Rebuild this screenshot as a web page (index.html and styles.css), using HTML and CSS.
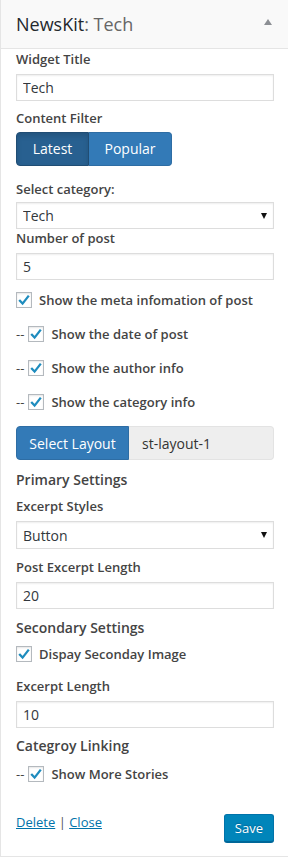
FILE: index.html
```html
<!DOCTYPE html>
<html lang="en">
<head>
  <meta charset="UTF-8">
  <title>NewsKit: Tech</title>
  <link rel="stylesheet" href="styles.css">
</head>
<body>
  <div class="widget">
    <div class="widget-top">
      <h3 class="widget-title">NewsKit<span class="in-title">: Tech</span></h3>
      <span class="toggle-arrow"></span>
    </div>

    <div class="widget-inside">
      <div class="field">
        <label class="field-label" for="title">Widget Title</label>
        <input class="text-input" type="text" id="title" value="Tech">
      </div>

      <div class="field field-btns">
        <label class="field-label">Content Filter</label>
        <div class="btn-group">
          <button class="btn btn-active btn-latest">Latest</button>
          <button class="btn btn-popular">Popular</button>
        </div>
      </div>

      <div class="field field-tight">
        <label class="field-label" for="cat">Select category:</label>
        <div class="select-box">
          <select id="cat"><option>Tech</option></select>
          <span class="select-arrow"></span>
        </div>
      </div>

      <div class="field">
        <label class="field-label" for="num">Number of post</label>
        <input class="text-input" type="text" id="num" value="5">
      </div>

      <div class="check-row first">
        <span class="cb"><svg viewBox="0 0 16 16" width="16" height="16"><polyline points="3.2,8 6.6,11.6 12.8,3.6" /></svg></span>
        Show the meta infomation of post
      </div>
      <div class="check-row sub">
        <span class="dash">--</span>
        <span class="cb"><svg viewBox="0 0 16 16" width="16" height="16"><polyline points="3.2,8 6.6,11.6 12.8,3.6" /></svg></span>
        Show the date of post
      </div>
      <div class="check-row sub">
        <span class="dash">--</span>
        <span class="cb"><svg viewBox="0 0 16 16" width="16" height="16"><polyline points="3.2,8 6.6,11.6 12.8,3.6" /></svg></span>
        Show the author info
      </div>
      <div class="check-row sub">
        <span class="dash">--</span>
        <span class="cb"><svg viewBox="0 0 16 16" width="16" height="16"><polyline points="3.2,8 6.6,11.6 12.8,3.6" /></svg></span>
        Show the category info
      </div>

      <div class="layout-group">
        <button class="btn btn-layout">Select Layout</button>
        <span class="layout-value">st-layout-1</span>
      </div>

      <h4 class="section-title primary">Primary Settings</h4>

      <div class="field">
        <label class="field-label label-gap" for="style">Excerpt Styles</label>
        <div class="select-box tall">
          <select id="style"><option>Button</option></select>
          <span class="select-arrow"></span>
        </div>
      </div>

      <div class="field">
        <label class="field-label label-gap-md" for="len">Post Excerpt Length</label>
        <input class="text-input" type="text" id="len" value="20">
      </div>

      <h4 class="section-title">Secondary Settings</h4>

      <div class="check-row second">
        <span class="cb"><svg viewBox="0 0 16 16" width="16" height="16"><polyline points="3.2,8 6.6,11.6 12.8,3.6" /></svg></span>
        Dispay Seconday Image
      </div>

      <div class="field">
        <label class="field-label label-gap-lg" for="elen">Excerpt Length</label>
        <input class="text-input" type="text" id="elen" value="10">
      </div>

      <h4 class="section-title linking">Categroy Linking</h4>

      <div class="check-row last">
        <span class="dash">--</span>
        <span class="cb"><svg viewBox="0 0 16 16" width="16" height="16"><polyline points="3.2,8 6.6,11.6 12.8,3.6" /></svg></span>
        Show More Stories
      </div>

      <div class="widget-control">
        <div class="control-links">
          <a href="#">Delete</a> | <a href="#">Close</a>
        </div>
        <button class="button-primary">Save</button>
      </div>
    </div>
  </div>
</body>
</html>
```

FILE: styles.css
```css
* {
  margin: 0;
  padding: 0;
  box-sizing: border-box;
}

body {
  background-color: #fff;
  font-family: 'Open Sans', sans-serif;
  color: #444;
}

.widget {
  width: 288px;
  border-left: 1px solid #e5e5e5;
  border-bottom: 1px solid #e5e5e5;
  background: #fff;
}

.widget-top {
  height: 49px;
  background: #f9f9f9;
  border-bottom: 1px solid #e5e5e5;
  display: flex;
  align-items: center;
  justify-content: space-between;
  padding: 0 16px 0 15px;
}

.widget-title {
  font-size: 18px;
  font-weight: 400;
  color: #23282d;
  line-height: 24px;
}

.in-title {
  color: #666;
}

.toggle-arrow {
  width: 0;
  height: 0;
  border-left: 4px solid transparent;
  border-right: 4px solid transparent;
  border-bottom: 6px solid #8c8f94;
  margin-top: -4px;
}

.widget-inside {
  padding: 1px 14px 14px 15px;
}

.field {
  margin-bottom: 8px;
}

.field-btns {
  margin-bottom: 14px;
}

.field-tight {
  margin-bottom: 0;
}

.field-label {
  display: block;
  font-size: 13px;
  font-weight: 600;
  line-height: 18px;
  margin-bottom: 6px;
  color: #444;
}

.label-gap {
  margin-top: 7px;
}

.label-gap-md {
  margin-top: 9px;
}

.label-gap-lg {
  margin-top: 14px;
}

.field-btns .field-label {
  margin-bottom: 5px;
}

.field-tight .field-label {
  margin-bottom: 4px;
}

.text-input {
  display: block;
  width: 100%;
  height: 27px;
  padding: 0 6px;
  border: 1px solid #ddd;
  box-shadow: inset 0 1px 2px rgba(0, 0, 0, 0.07);
  font-family: 'Open Sans', sans-serif;
  font-size: 14px;
  color: #32373c;
  background: #fff;
  outline: none;
}

.select-box {
  display: flex;
  align-items: center;
  width: 100%;
  height: 27px;
  border: 1px solid #ddd;
  box-shadow: inset 0 1px 2px rgba(0, 0, 0, 0.07);
  background: #fff;
  padding: 0 6px 0 6px;
}

.select-box.tall {
  height: 28px;
}

.select-box select {
  flex: 1;
  appearance: none;
  -webkit-appearance: none;
  border: none;
  background: transparent;
  font-family: 'Open Sans', sans-serif;
  font-size: 14px;
  color: #32373c;
  outline: none;
}

.select-arrow {
  width: 0;
  height: 0;
  border-left: 3.5px solid transparent;
  border-right: 3.5px solid transparent;
  border-top: 6px solid #111;
}

.btn-group {
  display: flex;
  width: 156px;
}

.btn {
  height: 34px;
  font-family: 'Open Sans', sans-serif;
  font-size: 14px;
  color: #fff;
  background: #337ab7;
  border: 1px solid #2e6da4;
  cursor: pointer;
}

.btn-latest {
  width: 73px;
  padding-bottom: 1px;
  border-radius: 4px 0 0 4px;
}

.btn-popular {
  width: 83px;
  padding-bottom: 1px;
  border-radius: 0 4px 4px 0;
  border-left: none;
}

.btn-active {
  background: #286090;
  border-color: #204d74;
  box-shadow: inset 0 3px 5px rgba(0, 0, 0, 0.125);
}

.check-row {
  display: flex;
  align-items: center;
  height: 18px;
  font-size: 13px;
  font-weight: 600;
  color: #444;
  margin-top: 16px;
}

.check-row.first {
  margin-top: 11px;
}

.check-row.second {
  margin-top: 7px;
}

.check-row.last {
  margin-top: 9px;
}

.dash {
  font-weight: 400;
  margin-right: 4px;
}

.cb {
  display: inline-block;
  width: 16px;
  height: 16px;
  border: 1px solid #b4b9be;
  background: #fff;
  box-shadow: inset 0 1px 2px rgba(0, 0, 0, 0.1);
  margin-right: 7px;
  flex-shrink: 0;
}

.cb svg {
  display: block;
  margin: -1px 0 0 -1px;
}

.cb polyline {
  fill: none;
  stroke: #1e8cbe;
  stroke-width: 2.3;
}

.layout-group {
  display: flex;
  margin-top: 15px;
  height: 34px;
}

.btn-layout {
  width: 113px;
  border-radius: 4px 0 0 4px;
}

.layout-value {
  flex: 1;
  display: flex;
  align-items: center;
  padding-left: 13px;
  background: #eee;
  border: 1px solid #e3e3e3;
  border-left: none;
  border-radius: 0 4px 4px 0;
  font-size: 14px;
  color: #333;
}

.section-title {
  font-size: 14px;
  font-weight: 600;
  line-height: 20px;
  color: #444;
  margin-top: 9px;
}

.section-title.primary {
  margin-top: 10px;
}

.section-title.linking {
  margin-top: 8px;
}

.widget-control {
  display: flex;
  justify-content: space-between;
  align-items: flex-start;
  margin-top: 31px;
}

.control-links {
  font-size: 13px;
  line-height: 18px;
  margin-top: -1px;
  color: #555;
}

.control-links a {
  color: #0073aa;
  text-decoration: underline;
}

.button-primary {
  height: 28px;
  padding: 0 10px;
  font-family: 'Open Sans', sans-serif;
  font-size: 13px;
  color: #fff;
  background: #0085ba;
  border: 1px solid #0073aa;
  border-bottom-color: #006799;
  border-radius: 3px;
  box-shadow: 0 1px 0 #006799;
  text-shadow: 0 -1px 1px #006799;
  cursor: pointer;
}
```
